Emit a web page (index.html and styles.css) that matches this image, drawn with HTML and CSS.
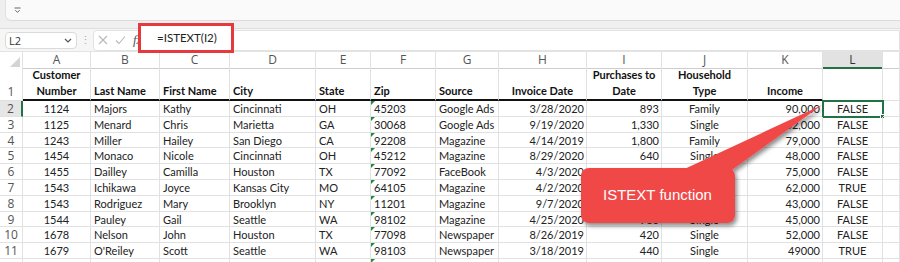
FILE: index.html
```html
<!DOCTYPE html>
<html lang="en">
<head>
    <meta charset="UTF-8">
    <title>ISTEXT example</title>
    <link rel="stylesheet" href="styles.css">
</head>
<body>
    <div class="qat">
        <div class="qat-panel">
            <svg width="7" height="7" viewBox="0 0 7 7"><path d="M0.5 1H6.5M1.3 3.2L3.5 5.4L5.7 3.2" fill="none" stroke="#666" stroke-width="1"/></svg>
        </div>
    </div>
    <div class="band"></div>
    <div class="fbar">
        <div class="namebox">
            <span>L2</span>
            <svg width="8" height="5" viewBox="0 0 8 5"><path d="M1 1L4 4L7 1" fill="none" stroke="#555" stroke-width="1.2"/></svg>
        </div>
        <span class="vdots">&#8942;</span>
        <div class="finput">
            <svg class="fbtn" width="10" height="10" viewBox="0 0 10 10"><path d="M1 1L9 9M9 1L1 9" stroke="#b8b8b8" stroke-width="1.1"/></svg>
            <svg class="fbtn" width="11" height="10" viewBox="0 0 11 10"><path d="M1 5.5L4 8.5L10 1.5" fill="none" stroke="#b8b8b8" stroke-width="1.1"/></svg>
            <span class="fx">fx</span>
        </div>
    </div>

    <div class="sheet">
        <div class="row colhdr">
            <div class="corner"><svg width="10" height="10" viewBox="0 0 10 10"><polygon points="10,0 10,10 0,10" fill="#d4d4d4"/></svg></div>
            <div>A</div><div>B</div><div>C</div><div>D</div><div>E</div><div>F</div>
            <div>G</div><div>H</div><div>I</div><div>J</div><div>K</div><div class="sel">L</div><div></div>
        </div>
        <div class="row head1">
            <div class="rh">1</div>
            <div class="mid">Customer<br>Number</div>
            <div>Last Name</div>
            <div>First Name</div>
            <div>City</div>
            <div>State</div>
            <div>Zip</div>
            <div>Source</div>
            <div class="mid">Invoice Date</div>
            <div class="mid">Purchases to<br>Date</div>
            <div class="mid">Household<br>Type</div>
            <div class="mid">Income</div>
            <div class="plain"></div>
            <div class="plain"></div>
        </div>
        <div class="row data"><div class="rh on">2</div><div>1124</div><div>Majors</div><div>Kathy</div><div>Cincinnati</div><div>OH</div><div>45203</div><div>Google Ads</div><div>3/28/2020</div><div>893</div><div>Family</div><div>90,000</div><div class="active">FALSE</div><div></div></div>
        <div class="row data"><div class="rh">3</div><div>1125</div><div>Menard</div><div>Chris</div><div>Marietta</div><div>GA</div><div>30068</div><div>Google Ads</div><div>9/19/2020</div><div>1,330</div><div>Single</div><div>62,000</div><div>FALSE</div><div></div></div>
        <div class="row data"><div class="rh">4</div><div>1243</div><div>Miller</div><div>Hailey</div><div>San Diego</div><div>CA</div><div>92208</div><div>Magazine</div><div>4/14/2019</div><div>1,800</div><div>Family</div><div>79,000</div><div>FALSE</div><div></div></div>
        <div class="row data"><div class="rh">5</div><div>1454</div><div>Monaco</div><div>Nicole</div><div>Cincinnati</div><div>OH</div><div>45212</div><div>Magazine</div><div>8/29/2020</div><div>640</div><div>Single</div><div>48,000</div><div>FALSE</div><div></div></div>
        <div class="row data"><div class="rh">6</div><div>1455</div><div>Dailley</div><div>Camilla</div><div>Houston</div><div>TX</div><div>77092</div><div>FaceBook</div><div>4/3/2020</div><div>1,120</div><div>Family</div><div>75,000</div><div>FALSE</div><div></div></div>
        <div class="row data"><div class="rh">7</div><div>1543</div><div>Ichikawa</div><div>Joyce</div><div>Kansas City</div><div>MO</div><div>64105</div><div>Magazine</div><div>4/2/2020</div><div>760</div><div>Single</div><div>62,000</div><div>TRUE</div><div></div></div>
        <div class="row data"><div class="rh">8</div><div>1543</div><div>Rodriguez</div><div>Mary</div><div>Brooklyn</div><div>NY</div><div>11201</div><div>Magazine</div><div>9/7/2020</div><div>510</div><div>Single</div><div>43,000</div><div>FALSE</div><div></div></div>
        <div class="row data"><div class="rh">9</div><div>1544</div><div>Pauley</div><div>Gail</div><div>Seattle</div><div>WA</div><div>98102</div><div>Magazine</div><div>4/25/2020</div><div>980</div><div>Single</div><div>45,000</div><div>FALSE</div><div></div></div>
        <div class="row data"><div class="rh">10</div><div>1678</div><div>Nelson</div><div>John</div><div>Houston</div><div>TX</div><div>77098</div><div>Newspaper</div><div>8/26/2019</div><div>420</div><div>Single</div><div>52,000</div><div>FALSE</div><div></div></div>
        <div class="row data"><div class="rh">11</div><div>1679</div><div>O'Reiley</div><div>Scott</div><div>Seattle</div><div>WA</div><div>98103</div><div>Newspaper</div><div>3/18/2019</div><div>440</div><div>Single</div><div>49000</div><div>TRUE</div><div></div></div>
        <div class="row data"><div class="rh"></div><div></div><div></div><div></div><div></div><div></div><div></div><div></div><div></div><div></div><div></div><div></div><div></div><div></div></div>
    </div>

    <!-- annotations drawn over the sheet -->
    <div class="formula-mark">=ISTEXT(I2)</div>
    <svg class="callout-art" width="900" height="262" viewBox="0 0 900 262">
        <defs>
            <filter id="shadow" x="-20%" y="-30%" width="140%" height="170%">
                <feDropShadow dx="2" dy="3" stdDeviation="2" flood-color="#000" flood-opacity="0.45"/>
            </filter>
        </defs>
        <g filter="url(#shadow)" fill="#f04646">
            <rect x="581" y="168" width="154" height="55" rx="8"/>
            <polygon points="678,172 729,172 822,105"/>
        </g>
    </svg>
    <div class="callout-text">ISTEXT function</div>
</body>
</html>
```

FILE: styles.css
```css
body {
    margin: 0;
    background-color: #fff;
    font-family: Lato, "Liberation Sans", sans-serif;
    width: 900px;
    height: 262px;
    overflow: hidden;
    position: relative;
}

/* top strip */
.qat {
    height: 22px;
    background-color: #efefef;
    padding-left: 5px;
    box-sizing: border-box;
}

.qat-panel {
    height: 21px;
    background-color: #fafafa;
    border-left: 1px solid #e2e2e2;
    border-bottom: 1px solid #dcdcdc;
    border-radius: 0 0 0 6px;
    display: flex;
    align-items: center;
    padding-left: 8px;
    box-sizing: border-box;
}

.band {
    height: 7px;
    background-color: #f0f0f0;
    border-bottom: 1px solid #dedede;
    box-sizing: border-box;
}

.fbar {
    height: 23px;
    background-color: #f6f6f6;
    display: flex;
    align-items: center;
    border-bottom: 1px solid #e3e3e3;
    box-sizing: border-box;
}

.namebox {
    margin-left: 5px;
    width: 72px;
    height: 17px;
    background-color: #fff;
    border: 1px solid #dadada;
    border-radius: 4px;
    box-sizing: border-box;
    display: flex;
    align-items: center;
    justify-content: space-between;
    padding: 0 4px 0 3px;
    font-family: "Open Sans", sans-serif;
    font-size: 11px;
    color: #333;
}

.vdots {
    width: 16px;
    text-align: center;
    color: #aaa;
    font-size: 11px;
}

.finput {
    flex: 1;
    height: 19px;
    background-color: #fff;
    border: 1px solid #e2e2e2;
    border-radius: 4px 0 0 4px;
    display: flex;
    align-items: center;
    padding-left: 4px;
    gap: 7px;
}

.fx {
    font-family: "Liberation Serif", serif;
    font-style: italic;
    font-size: 13px;
    color: #555;
}

/* sheet grid */
.row {
    display: grid;
    grid-template-columns: 23px 68px 69px 70px 86px 55px 65px 63px 88px 75px 86px 75px 60px 1fr;
}

.row > div {
    box-sizing: border-box;
    border-right: 1px solid #e1e1e1;
    border-bottom: 1px solid #e1e1e1;
    white-space: nowrap;
    overflow: hidden;
    position: relative;
}

.colhdr {
    height: 15px;
    font-family: "Open Sans", sans-serif;
    font-size: 12px;
    color: #555;
    line-height: 15px;
    text-align: center;
}

.colhdr > div {
    border-bottom-color: #cdcdcd;
    overflow: visible;
}

.colhdr .corner {
    display: flex;
    justify-content: flex-end;
    align-items: flex-end;
    padding: 0 2px 1px 0;
}

.colhdr .sel {
    background-color: #e2e2e2;
    border-bottom: 2px solid #217346;
    color: #333;
}

.rh {
    font-family: "Open Sans", sans-serif;
    font-size: 12px;
    color: #555;
    text-align: center;
    background-color: #fff;
}

.rh.on {
    background-color: #e6e6e6;
    border-right: 2px solid #217346;
}

.head1 {
    height: 34px;
    font-weight: bold;
    font-size: 11px;
    color: #111;
    line-height: 15.5px;
}

.head1 > div {
    display: flex;
    align-items: flex-end;
    padding: 0 3px 1px;
    border-bottom: 2px solid #111;
}

.head1 > .rh {
    font-weight: normal;
    font-size: 12px;
    color: #555;
    justify-content: center;
    padding: 0 0 1px;
    border-bottom: 1px solid #e1e1e1;
}

.head1 > .plain {
    border-bottom: 1px solid #e1e1e1;
}

.head1 > .mid {
    justify-content: center;
    text-align: center;
}

.data {
    height: 15.8px;
    font-size: 11px;
    color: #222;
    line-height: 15px;
}

.data > div {
    padding: 0 3px;
}

.data > .rh {
    padding: 0;
}

.data > div:nth-child(2),
.data > div:nth-child(11),
.data > div:nth-child(13) {
    text-align: center;
}

.data > div:nth-child(9),
.data > div:nth-child(10),
.data > div:nth-child(12) {
    text-align: right;
    padding-right: 2px;
}

/* number stored as text marker on zip cells */
.data > div:nth-child(7)::before {
    content: "";
    position: absolute;
    left: 0;
    top: 0;
    border-top: 4px solid #1d8a3c;
    border-right: 4px solid transparent;
}

.data > .active {
    overflow: visible;
    outline: 2px solid #217346;
    outline-offset: -1px;
}

.data > .active::after {
    content: "";
    position: absolute;
    right: -3px;
    bottom: -3px;
    width: 5px;
    height: 5px;
    background-color: #217346;
    border: 1px solid #fff;
    box-sizing: border-box;
}

/* annotations */
.formula-mark {
    position: absolute;
    left: 138px;
    top: 23px;
    width: 96px;
    height: 30px;
    box-sizing: border-box;
    border: 3px solid #e6393e;
    background-color: #fff;
    padding-left: 16px;
    font-family: Lato, sans-serif;
    font-size: 11.5px;
    line-height: 24px;
    color: #222;
}

.callout-art {
    position: absolute;
    left: 0;
    top: 0;
}

.callout-text {
    position: absolute;
    left: 603px;
    top: 186px;
    font-family: "Liberation Sans", Arial, sans-serif;
    font-size: 15px;
    color: #fff;
}
```
